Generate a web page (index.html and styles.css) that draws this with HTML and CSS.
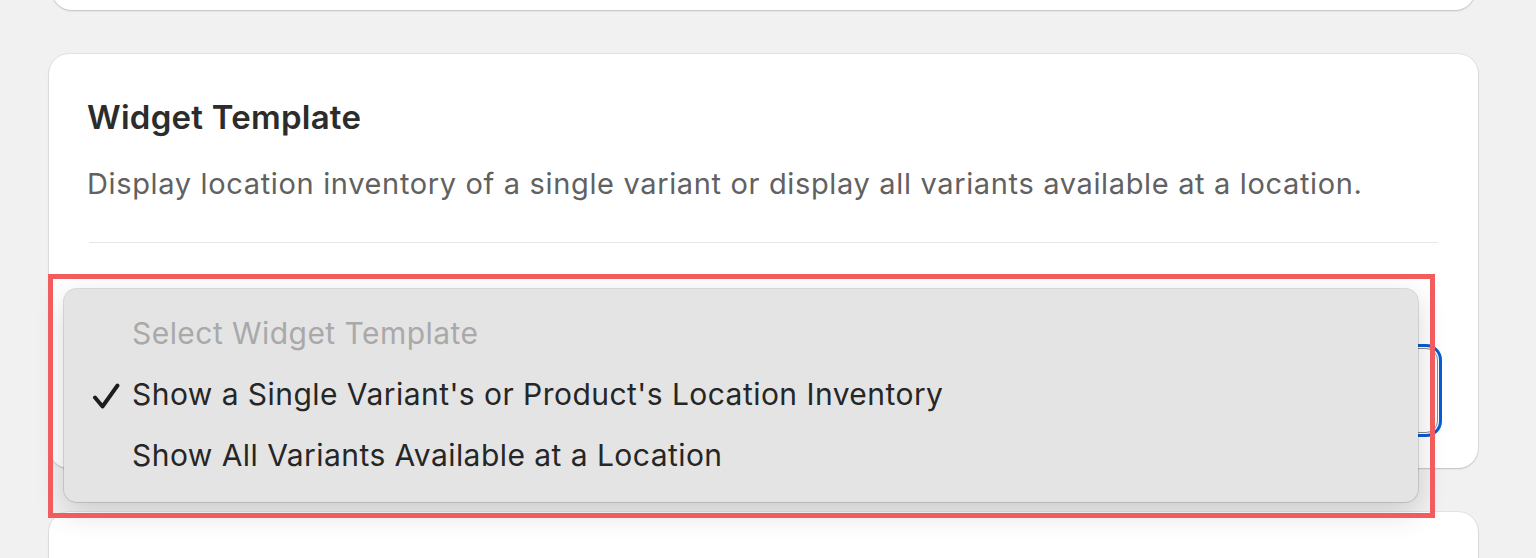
FILE: index.html
```html
<!DOCTYPE html>
<html lang="en">
<head>
<meta charset="utf-8">
<title>Widget Template</title>
<link rel="stylesheet" href="styles.css">
</head>
<body>
<div class="page">
  <div class="card card-top"></div>

  <section class="card card-main">
    <h2 class="title">Widget Template</h2>
    <p class="desc">Display location inventory of a single variant or display all variants available at a location.</p>
    <div class="divider"></div>
    <div class="select"></div>

    <div class="menu">
      <div class="item placeholder">Select Widget Template</div>
      <div class="item selected">
        <svg class="check" width="28" height="26" viewBox="0 0 28 26"><path d="M3 14.5 L10.5 23.5 L25.5 2.5" fill="none" stroke="#1c1c1c" stroke-width="3.9" stroke-linecap="round" stroke-linejoin="round"/></svg>
        Show a Single Variant's or Product's Location Inventory
      </div>
      <div class="item">Show All Variants Available at a Location</div>
    </div>
    <div class="highlight"></div>
  </section>

  <div class="card card-bottom"></div>
</div>
</body>
</html>
```

FILE: styles.css
```css
html, body {
  margin: 0;
  padding: 0;
  background: #f1f1f1;
  overflow: hidden;
}

body {
  font-family: Inter, "Noto Sans", "Liberation Sans", sans-serif;
  height: 558px;
}

.page {
  padding: 0 58px 0 49px;
  display: flex;
  flex-direction: column;
  gap: 44px;
}

.card {
  background: #ffffff;
  border-radius: 20px;
  box-shadow: 0 1px 2px rgba(0, 0, 0, 0.16), 0 0 0 1px rgba(0, 0, 0, 0.05);
}

.card-top {
  height: 40px;
  margin: -30px 3px 0;
}

.card-main {
  position: relative;
  padding: 43px 40px 35px;
}

.card-bottom {
  height: 46px;
  border-radius: 20px 20px 0 0;
}

.title {
  margin: 0 0 0 -2px;
  font-size: 33px;
  line-height: 40px;
  font-weight: 600;
  letter-spacing: 0.25px;
  color: #2c2c2c;
}

.desc {
  margin: 29px 0 0 -2px;
  font-size: 29px;
  line-height: 36px;
  letter-spacing: 0.65px;
  color: #616161;
}

.divider {
  margin-top: 40px;
  height: 1px;
  background: #e6e6e6;
}

.select {
  margin-top: 105px;
  height: 83px;
  border: 1px solid #8a8a8a;
  border-radius: 12px;
  background: #fff;
  outline: 3px solid #0a5bd6;
  outline-offset: 1px;
}

.menu {
  position: absolute;
  left: 15px;
  top: 235px;
  width: 1354px;
  height: 213px;
  box-sizing: border-box;
  padding: 14px 0 14px;
  background: #e4e4e4;
  border-radius: 13px;
  box-shadow: 0 0 0 1px rgba(0, 0, 0, 0.13), 0 10px 30px rgba(0, 0, 0, 0.16);
}

.item {
  position: relative;
  height: 61px;
  line-height: 61px;
  padding-left: 68px;
  font-size: 30px;
  letter-spacing: 0.45px;
  color: #262626;
}

.item.placeholder {
  color: #a9a9a9;
}

.check {
  position: absolute;
  left: 28px;
  top: 19px;
}

.highlight {
  position: absolute;
  left: -1px;
  top: 220px;
  width: 1387px;
  height: 244px;
  box-sizing: border-box;
  border: 5px solid #f25c5c;
}
```
